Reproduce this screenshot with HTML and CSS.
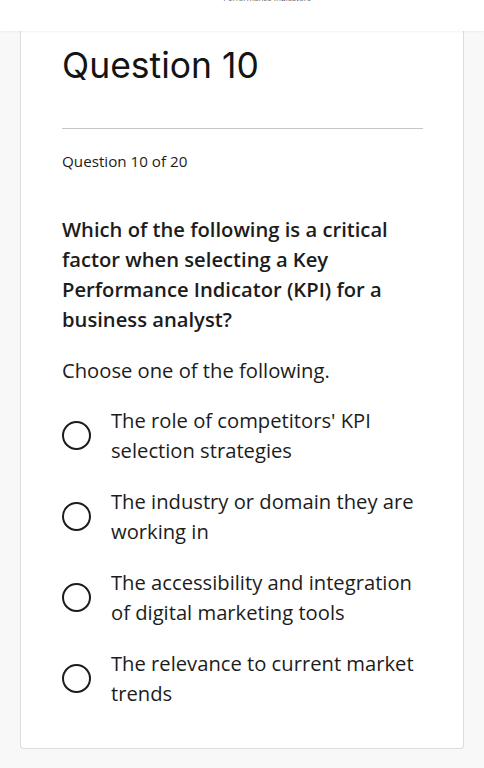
FILE: index.html
```html
<!DOCTYPE html>
<html>
<head>
<meta charset="utf-8">
<link rel="stylesheet" href="styles.css">
</head>
<body>
<header class="topbar"><span class="topbar-text">Performance Indicators</span></header>
<main class="page">
  <section class="card">
    <h1 class="title">Question 10</h1>
    <hr class="divider">
    <p class="counter">Question 10 of 20</p>
    <p class="question">Which of the following is a critical factor when selecting a Key Performance Indicator (KPI) for a business analyst?</p>
    <p class="prompt">Choose one of the following.</p>
    <ul class="options">
      <li class="option"><span class="radio"></span><span class="label">The role of competitors' KPI selection strategies</span></li>
      <li class="option"><span class="radio"></span><span class="label">The industry or domain they are working in</span></li>
      <li class="option"><span class="radio"></span><span class="label">The accessibility and integration of digital marketing tools</span></li>
      <li class="option"><span class="radio"></span><span class="label">The relevance to current market trends</span></li>
    </ul>
  </section>
</main>
</body>
</html>
```
FILE: styles.css
```css
html, body {
  margin: 0;
  padding: 0;
  background: #f8f8f8;
  color: #1c1c1c;
  font-family: "Open Sans", "Liberation Sans", sans-serif;
}
.topbar {
  height: 31px;
  background: #ffffff;
  box-shadow: 0 1px 2px rgba(0,0,0,0.05);
  display: flex;
  justify-content: center;
  overflow: hidden;
  position: relative;
  z-index: 2;
}
.topbar-text {
  font-size: 8px;
  line-height: 8px;
  margin-top: -6px;
  color: #666;
  padding-left: 50px;
}
.page {
  padding: 0 20px 20px 20px;
}
.card {
  background: #ffffff;
  border: 1px solid #dcdcdc;
  border-top: none;
  border-radius: 0 0 4px 4px;
  padding: 15px 40px 40px 41px;
}
.title {
  margin: 0;
  font-family: Inter, "Liberation Sans", sans-serif;
  font-weight: 400;
  font-size: 35.5px;
  line-height: 40px;
  color: #141414;
}
.divider {
  margin: 42px 0 0 0;
  border: none;
  border-top: 1px solid #c6c6c6;
  height: 0;
}
.counter {
  margin: 21px 0 0 0;
  font-size: 15.2px;
  line-height: 22px;
  font-weight: 500;
}
.question {
  margin: 42px 0 0 0;
  font-size: 20.2px;
  line-height: 30px;
  font-weight: 600;
}
.prompt {
  margin: 21px 0 0 0;
  font-size: 20.2px;
  line-height: 30px;
  font-weight: 400;
}
.options {
  list-style: none;
  margin: 20px 0 0 0;
  padding: 0;
  display: flex;
  flex-direction: column;
  gap: 21px;
}
.option {
  display: flex;
  align-items: center;
  gap: 20px;
}
.radio {
  flex: none;
  width: 25px;
  height: 25px;
  border: 2.5px solid #1c1c1c;
  border-radius: 50%;
}
.label {
  font-size: 20.2px;
  line-height: 30px;
}
```
